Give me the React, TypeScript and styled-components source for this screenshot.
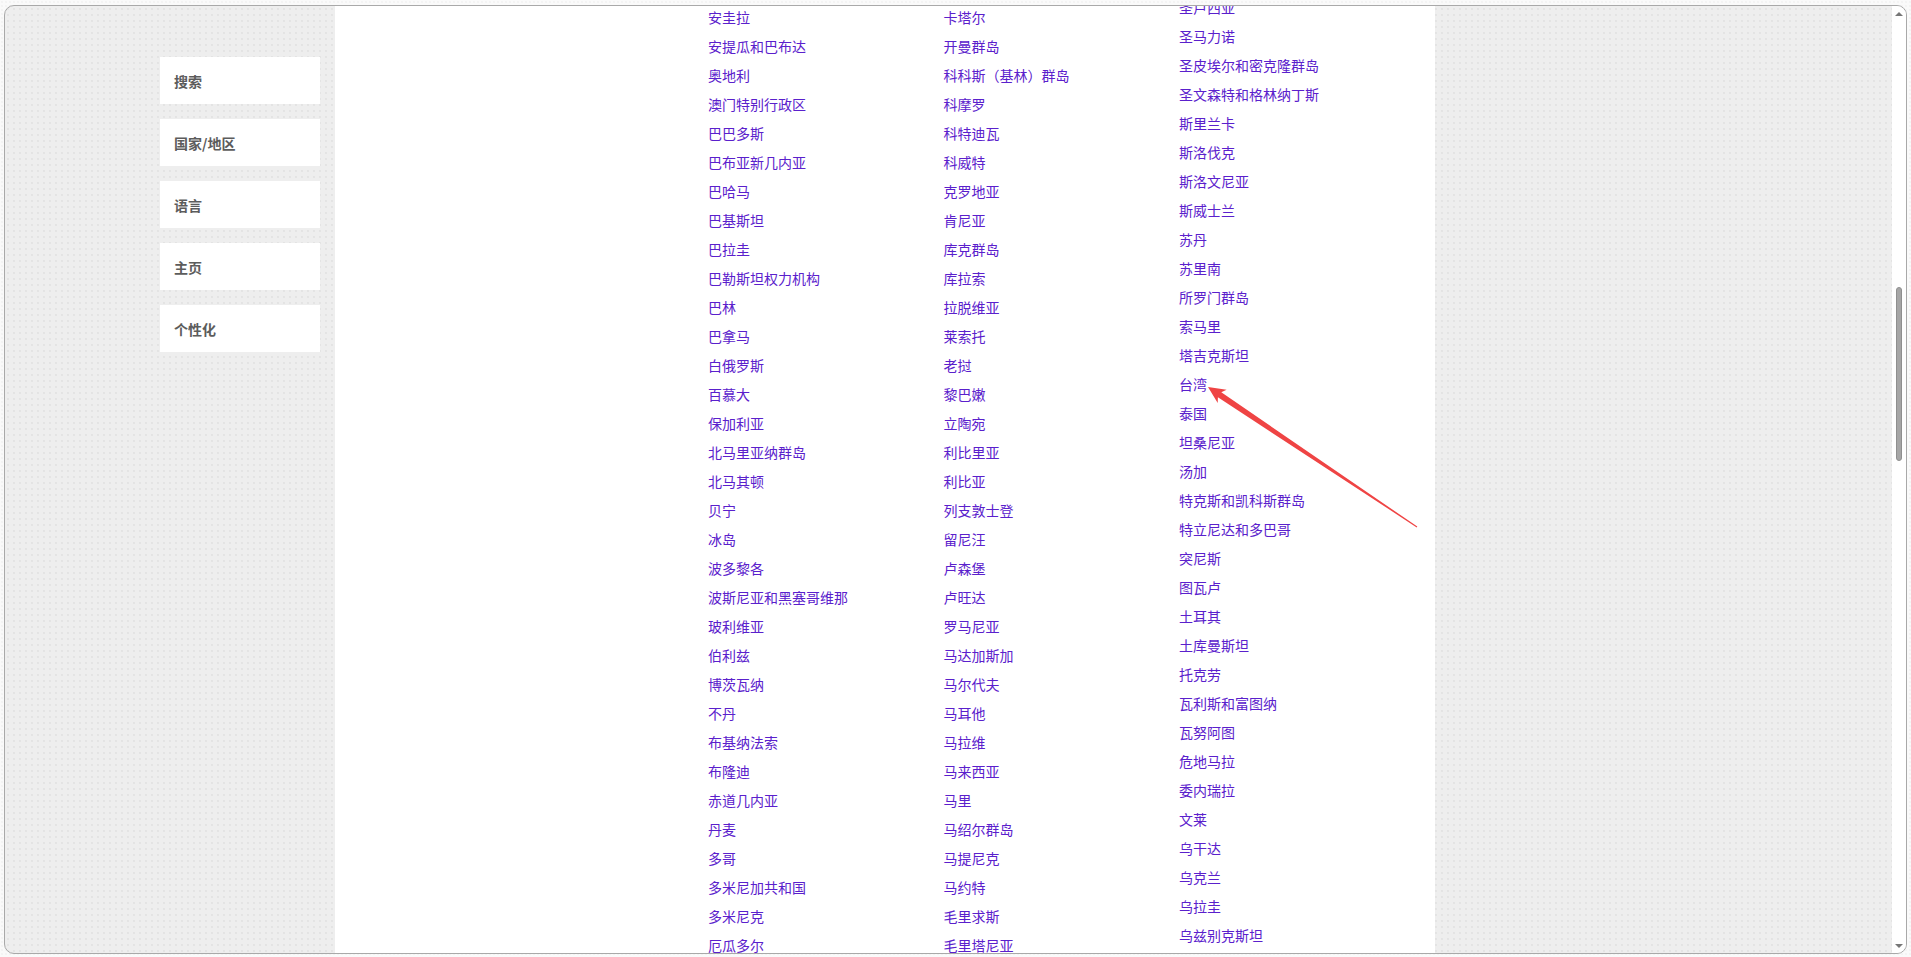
import styled, { createGlobalStyle } from "styled-components";

const GlobalStyle = createGlobalStyle`
  html, body {
    margin: 0;
    height: 100%;
    overflow: hidden;
    background: #fafafa;
    font-family: "Noto Sans CJK SC", "Noto Sans", sans-serif;
  }
  #root {
    height: 100%;
  }
`;

const Page = styled.div`
  position: relative;
  height: 100vh;
  padding: 5px 4px 3px 4px;
  box-sizing: border-box;
  background-color: #fafafa;
  background-image: radial-gradient(#ececec 0.6px, transparent 0.8px);
  background-size: 4px 4px;
`;

const Frame = styled.div`
  height: 100%;
  box-sizing: border-box;
  border: 1px solid #a9a9a9;
  border-radius: 10px;
  overflow: hidden;
  display: flex;
  background-color: #eeeeee;
  background-image: radial-gradient(#e4e4e4 0.7px, transparent 0.9px);
  background-size: 6px 6px;
`;

const Main = styled.div`
  flex: 1;
  display: flex;
  gap: 15px;
  padding-left: 155px;
  min-width: 0;
`;

const Sidebar = styled.nav`
  width: 160px;
  display: flex;
  flex-direction: column;
  gap: 15px;
  padding-top: 51px;
`;

const NavButton = styled.div`
  height: 47px;
  background: #ffffff;
  display: flex;
  align-items: center;
  padding-left: 14px;
  font-size: 14px;
  font-weight: 700;
  color: #5c5c5c;
`;

const Panel = styled.section`
  width: 1100px;
  background: #ffffff;
  display: grid;
  grid-template-columns: repeat(3, 235.5px);
  padding-left: 373px;
  box-sizing: border-box;
  overflow: hidden;
`;

const Column = styled.ul<{ $offset: number }>`
  list-style: none;
  margin: ${(p) => p.$offset}px 0 0 0;
  padding: 0;
  display: flex;
  flex-direction: column;
`;

const Item = styled.li`
  height: 29px;
  line-height: 29px;
  font-size: 14px;
  color: #5a20cc;
  white-space: nowrap;
`;

const Scrollbar = styled.div`
  width: 14px;
  background: #ffffff;
  display: flex;
  flex-direction: column;
  align-items: center;
`;

const ScrollArrow = styled.div<{ $down?: boolean }>`
  width: 0;
  height: 0;
  border-left: 4px solid transparent;
  border-right: 4px solid transparent;
  ${(p) =>
    p.$down
      ? "border-top: 4px solid #777; margin-top: auto; margin-bottom: 5px;"
      : "border-bottom: 4px solid #777; margin-top: 6px;"}
`;

const Thumb = styled.div`
  width: 6px;
  height: 174px;
  margin-top: 271px;
  border-radius: 3px;
  background: #a6a6a6;
  border: 1px solid #8f8f8f;
  box-sizing: border-box;
`;

const ArrowOverlay = styled.svg`
  position: absolute;
  left: 0;
  top: 0;
  width: 100%;
  height: 100%;
  pointer-events: none;
`;

const navItems = ["搜索", "国家/地区", "语言", "主页", "个性化"];

const col1 = [
  "安圭拉", "安提瓜和巴布达", "奥地利", "澳门特别行政区", "巴巴多斯",
  "巴布亚新几内亚", "巴哈马", "巴基斯坦", "巴拉圭", "巴勒斯坦权力机构",
  "巴林", "巴拿马", "白俄罗斯", "百慕大", "保加利亚", "北马里亚纳群岛",
  "北马其顿", "贝宁", "冰岛", "波多黎各", "波斯尼亚和黑塞哥维那",
  "玻利维亚", "伯利兹", "博茨瓦纳", "不丹", "布基纳法索", "布隆迪",
  "赤道几内亚", "丹麦", "多哥", "多米尼加共和国", "多米尼克", "厄瓜多尔",
];

const col2 = [
  "卡塔尔", "开曼群岛", "科科斯（基林）群岛", "科摩罗", "科特迪瓦", "科威特",
  "克罗地亚", "肯尼亚", "库克群岛", "库拉索", "拉脱维亚", "莱索托", "老挝",
  "黎巴嫩", "立陶宛", "利比里亚", "利比亚", "列支敦士登", "留尼汪", "卢森堡",
  "卢旺达", "罗马尼亚", "马达加斯加", "马尔代夫", "马耳他", "马拉维",
  "马来西亚", "马里", "马绍尔群岛", "马提尼克", "马约特", "毛里求斯",
  "毛里塔尼亚",
];

const col3 = [
  "圣卢西亚", "圣马力诺", "圣皮埃尔和密克隆群岛", "圣文森特和格林纳丁斯",
  "斯里兰卡", "斯洛伐克", "斯洛文尼亚", "斯威士兰", "苏丹", "苏里南",
  "所罗门群岛", "索马里", "塔吉克斯坦", "台湾", "泰国", "坦桑尼亚", "汤加",
  "特克斯和凯科斯群岛", "特立尼达和多巴哥", "突尼斯", "图瓦卢", "土耳其",
  "土库曼斯坦", "托克劳", "瓦利斯和富图纳", "瓦努阿图", "危地马拉",
  "委内瑞拉", "文莱", "乌干达", "乌克兰", "乌拉圭", "乌兹别克斯坦",
];

// the list is scrolled, so the first rows sit partly above the panel
const columns = [
  { items: col1, offset: -3.5 },
  { items: col2, offset: -3.5 },
  { items: col3, offset: -13.5 },
];

const App = () => {
  return (
    <>
      <GlobalStyle />
      <Page>
        <Frame>
          <Main>
            <Sidebar>
              {navItems.map((label) => (
                <NavButton key={label}>{label}</NavButton>
              ))}
            </Sidebar>
            <Panel>
              {columns.map((col, i) => (
                <Column key={i} $offset={col.offset}>
                  {col.items.map((name) => (
                    <Item key={name}>{name}</Item>
                  ))}
                </Column>
              ))}
            </Panel>
          </Main>
          <Scrollbar>
            <ScrollArrow />
            <Thumb />
            <ScrollArrow $down />
          </Scrollbar>
        </Frame>

        {/* annotation arrow pointing at 台湾 */}
        <ArrowOverlay viewBox="0 0 1911 957" preserveAspectRatio="none">
          <polygon
            points="1208,387 1226.6,389.8 1221.3,392.3 1417.3,526.6 1416.7,527.4 1217.9,397.3 1217.7,403.1"
            fill="#ef4444"
          />
        </ArrowOverlay>
      </Page>
    </>
  );
};

export default App;
